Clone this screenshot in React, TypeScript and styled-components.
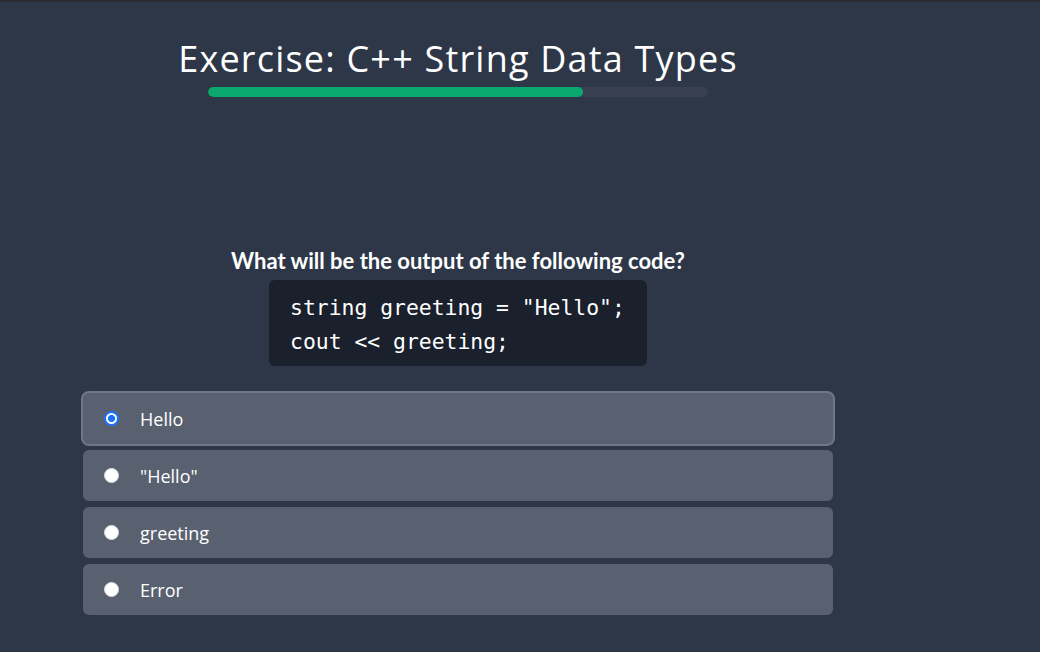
import React, { useState } from "react";
import styled, { createGlobalStyle } from "styled-components";

const GlobalStyle = createGlobalStyle`
  html, body { margin: 0; padding: 0; background: #2d3748; }
  body { font-family: "Open Sans", "Noto Sans", sans-serif; color: #ffffff; }
  * { box-sizing: border-box; }
`;

const Page = styled.div`
  min-height: 652px;
  border-top: 2px solid #2a2a30;
  background: #2d3748;
  display: flex;
`;

const Main = styled.main`
  width: 916px;
  display: flex;
  flex-direction: column;
  align-items: center;
  padding-top: 33px;
`;

const Title = styled.h1`
  margin: 0;
  font-family: "Open Sans", sans-serif;
  font-weight: 400;
  font-size: 36px;
  letter-spacing: 1.2px;
  line-height: 48px;
  color: #ffffff;
`;

const Track = styled.div`
  margin-top: 4px;
  width: 500px;
  height: 10px;
  border-radius: 5px;
  background: #394150;
  overflow: hidden;
`;

const Fill = styled.div`
  height: 100%;
  border-radius: 5px;
  background: #0aa86e;
`;

const Question = styled.p`
  margin: 151px 0 0;
  font-family: Lato, sans-serif;
  font-weight: 700;
  font-size: 22px;
  line-height: 26px;
  color: #ffffff;
`;

const Code = styled.pre`
  margin: 6px 0 0;
  width: 378px;
  padding: 11px 21px 7px;
  background: #1a202c;
  border-radius: 6px;
  font-family: "DejaVu Sans Mono", monospace;
  font-size: 21.4px;
  line-height: 34px;
  color: #ffffff;
`;

const Options = styled.div`
  margin-top: 27px;
  width: 750px;
  display: flex;
  flex-direction: column;
  gap: 6px;
`;

const Option = styled.label<{ $selected: boolean }>`
  display: flex;
  align-items: center;
  gap: 21px;
  height: 51px;
  padding: 0 0 0 21px;
  border-radius: 6px;
  background: #596170;
  box-shadow: ${(p) => (p.$selected ? "0 0 0 2px #6f7686" : "none")};
  font-family: "Open Sans", sans-serif;
  font-size: 18px;
  color: #ffffff;
  cursor: pointer;
`;

const Radio = styled.input`
  appearance: none;
  margin: 0;
  width: 15px;
  height: 15px;
  border-radius: 50%;
  background: #ffffff;
  border: 1px solid #d9dbe0;
  &:checked {
    border: 2.5px solid #1a73ff;
    background: radial-gradient(circle, #1a73ff 0 3.3px, #ffffff 3.8px);
  }
`;

const choices = ["Hello", '"Hello"', "greeting", "Error"];

export default function App() {
  const [selected, setSelected] = useState(0);
  return (
    <>
      <GlobalStyle />
      <Page>
        <Main>
          <Title>Exercise: C++ String Data Types</Title>
          <Track>
            <Fill style={{ width: "75%" }} />
          </Track>
          <Question>What will be the output of the following code?</Question>
          <Code>{`string greeting = "Hello";\ncout << greeting;`}</Code>
          <Options>
            {choices.map((c, i) => (
              <Option key={c} $selected={selected === i}>
                <Radio
                  type="radio"
                  name="answer"
                  checked={selected === i}
                  onChange={() => setSelected(i)}
                />
                {c}
              </Option>
            ))}
          </Options>
        </Main>
      </Page>
    </>
  );
}
